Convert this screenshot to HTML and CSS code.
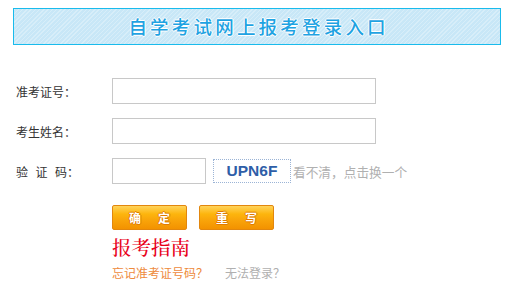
FILE: index.html
```html
<!DOCTYPE html>
<html lang="zh-CN">
<head>
<meta charset="utf-8">
<title>自学考试网上报考登录入口</title>
<link rel="stylesheet" href="styles.css">
</head>
<body>
<div class="page">
  <div class="banner"><span class="banner-text">自学考试网上报考登录入口</span></div>
  <form class="login">
    <div class="row">
      <label class="label">准考证号：</label>
      <input class="field" type="text">
    </div>
    <div class="row">
      <label class="label">考生姓名：</label>
      <input class="field" type="text">
    </div>
    <div class="row">
      <label class="label spaced"><span>验</span><span>证</span><span>码：</span></label>
      <input class="field short" type="text">
      <span class="captcha">UPN6F</span>
      <span class="hint">看不清，点击换一个</span>
    </div>
    <div class="buttons">
      <button class="btn" type="button"><span>确</span><span>定</span></button>
      <button class="btn" type="button"><span>重</span><span>写</span></button>
    </div>
    <div class="guide">报考指南</div>
    <div class="links">
      <a class="forgot">忘记准考证号码？</a>
      <a class="cannot">无法登录？</a>
    </div>
  </form>
</div>
</body>
</html>
```
FILE: styles.css
```css
html, body {
  margin: 0;
  padding: 0;
  background: #fff;
}
body {
  font-family: "Noto Sans CJK SC", "Liberation Sans", sans-serif;
  font-size: 12px;
  color: #333;
}
.page {
  padding: 8px 0 0 13px;
}
.banner {
  box-sizing: border-box;
  width: 488px;
  height: 37px;
  border: 1px solid #19bbec;
  background-color: #c8e7f7;
  background-image: repeating-linear-gradient(135deg, rgba(255,255,255,0.28) 0 1px, rgba(255,255,255,0) 1px 3px);
  display: flex;
  align-items: center;
  justify-content: center;
}
.banner-text {
  font-size: 18.5px;
  letter-spacing: 3.2px;
  padding-left: 3.2px;
  color: #1fa3e2;
  line-height: 1;
  font-weight: 500;
  text-shadow: 1px 0 0 #fff, -1px 0 0 #fff, 0 1px 0 #fff, 0 -1px 0 #fff;
}
.login {
  margin: 33px 0 0 3px;
  display: flex;
  flex-direction: column;
}
.row {
  display: flex;
  align-items: center;
  height: 26px;
  margin-bottom: 14px;
}
.label {
  width: 96px;
  color: #333;
  font-size: 12px;
}
.label.spaced {
  display: flex;
  gap: 7.5px;
}
.field {
  box-sizing: border-box;
  width: 264px;
  height: 26px;
  border: 1px solid #c8c8c8;
  margin: 0;
  padding: 0 4px;
  background: #fff;
}
.field.short {
  width: 94px;
}
.captcha {
  box-sizing: border-box;
  margin-left: 7px;
  width: 78px;
  height: 24px;
  border: 1px dotted #9bb4d6;
  display: flex;
  align-items: center;
  justify-content: center;
  font-family: "Liberation Sans", sans-serif;
  font-weight: bold;
  font-size: 15.5px;
  color: #2e5ea7;
}
.hint {
  margin-left: 2px;
  font-size: 12.7px;
  color: #b0b0b0;
}
.buttons {
  display: flex;
  gap: 12px;
  margin-left: 96px;
  margin-top: 7px;
}
.btn {
  box-sizing: border-box;
  width: 75px;
  height: 25px;
  border: 1px solid #e2870e;
  border-radius: 2px;
  background: linear-gradient(#ffd35a 0%, #fdb50d 35%, #f9a50a 60%, #f39200 100%);
  display: flex;
  align-items: center;
  justify-content: center;
  gap: 17px;
  padding: 0;
  font-family: "Noto Sans CJK SC", sans-serif;
  font-size: 12px;
  font-weight: bold;
  color: #fff;
  text-shadow: 1px 0 0 #e07b00, -1px 0 0 #e07b00, 0 1px 0 #e07b00, 0 -1px 0 #e07b00;
}
.guide {
  margin: 6px 0 0 96px;
  font-family: "Noto Serif CJK SC", "Liberation Serif", serif;
  font-size: 19.5px;
  line-height: 22px;
  font-weight: 500;
  color: #e8001a;
}
.links {
  margin: 6px 0 0 96px;
  display: flex;
  gap: 17px;
  font-size: 12px;
}
.forgot {
  color: #ee8a3c;
}
.cannot {
  color: #b0b0b0;
}
```
